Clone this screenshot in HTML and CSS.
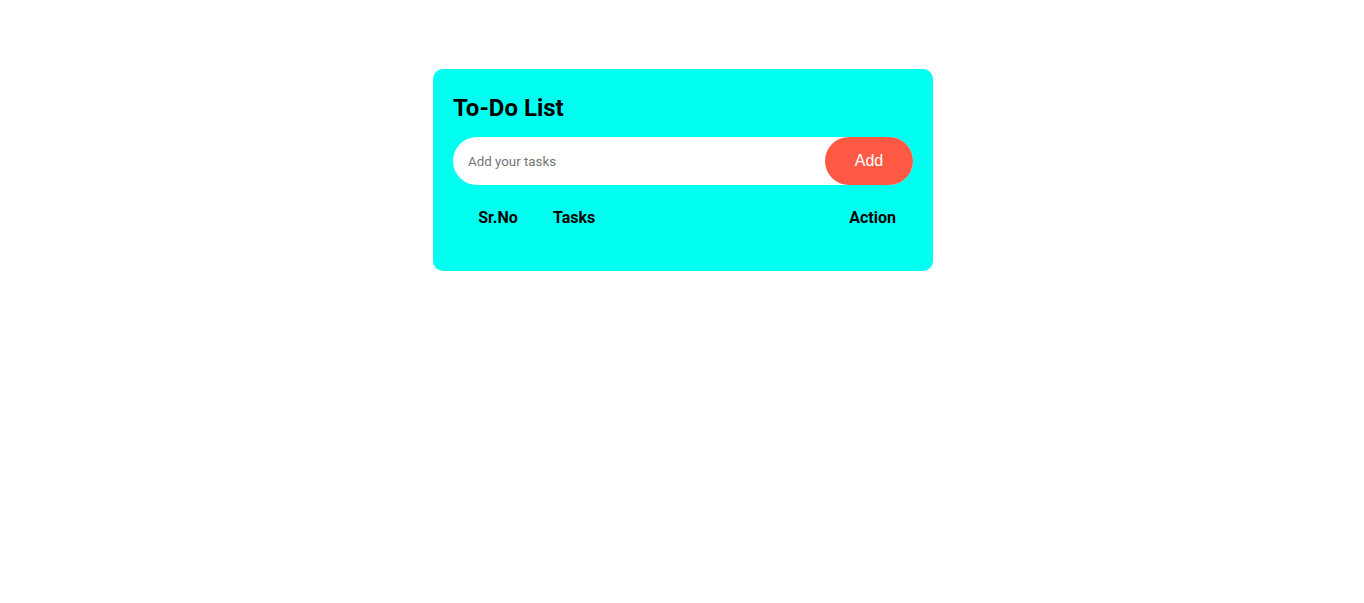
FILE: index.html
```html
<!DOCTYPE html>
<html>
<head>
<meta charset="utf-8">
<link rel="stylesheet" href="styles.css">
</head>
<body>
<div class="container">
  <div class="todo">
    <h2 class="title">To-Do List</h2>
    <div class="row">
      <input class="input" type="text" placeholder="Add your tasks">
      <button class="add">Add</button>
    </div>
    <div class="head">
      <div class="c1">Sr.No</div>
      <div class="c2">Tasks</div>
      <div class="c3">Action</div>
    </div>
  </div>
</div>
</body>
</html>
```
FILE: styles.css
```css
* { box-sizing: border-box; }
body {
  margin: 0;
  font-family: Roboto, "Liberation Sans", sans-serif;
  background: #fff;
}
.container {
  display: flex;
  justify-content: center;
  padding-top: 69px;
  padding-left: 2px;
}
.todo {
  width: 500px;
  background: #00fff0;
  border-radius: 10px;
  padding: 20px 20px 41px;
}
.title {
  margin: 0 0 10px;
  font-size: 24px;
  line-height: 38px;
  font-weight: 700;
  color: #000;
}
.row {
  display: flex;
  align-items: center;
  background: #fff;
  border-radius: 30px;
  height: 48px;
}
.input {
  flex: 1;
  border: none;
  outline: none;
  background: transparent;
  padding: 0 15px;
  font-family: Roboto, sans-serif;
  font-size: 13.333px;
  color: #333;
  height: 48px;
}
.input::placeholder { color: #757575; }
.add {
  width: 88px;
  height: 48px;
  border: none;
  border-radius: 40px;
  background: #ff5945;
  color: #fff;
  font-family: "Liberation Sans", Arial, sans-serif;
  font-size: 16px;
  padding: 0;
  cursor: pointer;
}
.head {
  display: flex;
  margin-top: 21px;
  font-size: 16px;
  line-height: 24px;
  font-weight: 700;
  color: #000;
}
.c1 { width: 90px; text-align: center; }
.c2 { flex: 1; padding-left: 10px; }
.c3 { padding-right: 17px; }
```
